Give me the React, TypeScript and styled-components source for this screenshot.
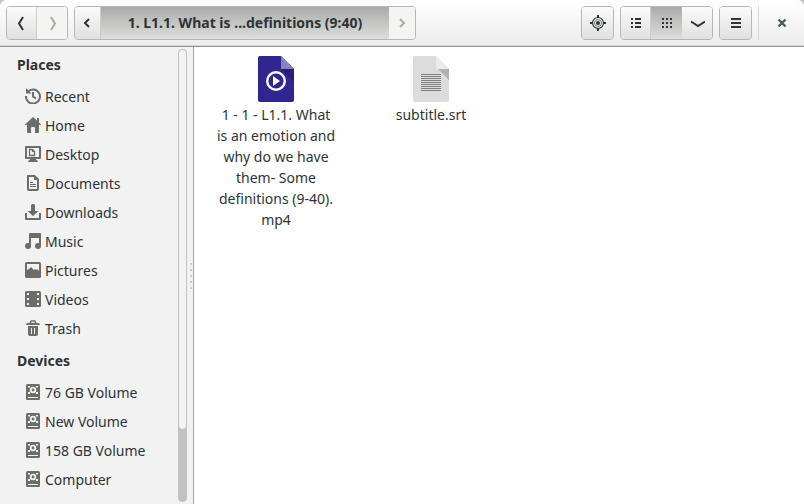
import React from "react";
import styled, { createGlobalStyle, css } from "styled-components";

const GlobalStyle = createGlobalStyle`
  * { box-sizing: border-box; }
  html, body, #root { height: 100%; }
  body {
    margin: 0;
    overflow: hidden;
    background: #c4c5c4;
    color: #2e3436;
    font-family: "Noto Sans", "Open Sans", sans-serif;
    font-size: 14px;
  }
  button { font: inherit; color: inherit; }
`;

const Window = styled.div`
  display: flex;
  flex-direction: column;
  height: 100vh;
  overflow: hidden;
  background: #ffffff;
  border-radius: 7px 7px 0 0;
`;

const HeaderBar = styled.header`
  display: flex;
  align-items: flex-start;
  flex: none;
  height: 47px;
  padding: 6px 5px 0 6px;
  gap: 6px;
  background: linear-gradient(#ffffff, #ececec);
  border-bottom: 1px solid #8f928f;
  box-shadow: inset 0 -1px #d6d8d6;
`;

const ButtonGroup = styled.div`
  display: flex;
  height: 34px;
  border: 1px solid #b4b7b3;
  border-radius: 4px;
  overflow: hidden;
`;

const Spacer = styled.div`
  flex: 1;
`;

const BarButton = styled.button<{ $width: number; $active?: boolean; $divided?: boolean }>`
  display: flex;
  align-items: center;
  justify-content: center;
  width: ${(p) => p.$width}px;
  height: 32px;
  padding: 0;
  border: 0;
  background: linear-gradient(#fbfbfb, #e0e0e0);
  ${(p) => p.$divided && css`border-right: 1px solid #cccecb;`}
  ${(p) => p.$active && css`
    background: linear-gradient(#a8aba7, #bcbebb 35%, #dededd);
    font-weight: 700;
  `}
  &:disabled {
    background: #f4f4f2;
    color: #a7aba7;
  }
`;

const PathLabel = styled.span`
  padding-bottom: 2px;
  white-space: nowrap;
`;

const Divider = styled.div`
  width: 1px;
  height: 34px;
  background: #d5d7d5;
`;

const CloseButton = styled.button`
  display: flex;
  align-items: center;
  justify-content: center;
  width: 34px;
  height: 34px;
  padding: 0;
  border: 0;
  background: none;
`;

const Body = styled.div`
  display: flex;
  flex: 1;
  min-height: 0;
`;

const Sidebar = styled.aside`
  display: flex;
  flex: none;
  width: 194px;
  background: #f2f2f2;
  border-right: 1px solid #a1a3a0;
`;

const PlacesNav = styled.nav`
  flex: 1;
  overflow: hidden;
`;

const SectionTitle = styled.h2`
  margin: 0;
  padding-left: 17px;
  font-size: 14px;
  font-weight: 700;
  line-height: 35px;
`;

const PlaceList = styled.ul`
  margin: 0;
  padding: 0;
  list-style: none;
`;

const PlaceLink = styled.a`
  display: flex;
  align-items: center;
  gap: 4px;
  height: 29px;
  padding-left: 25px;
  color: inherit;
  line-height: 29px;
  text-decoration: none;
  white-space: nowrap;
  svg { flex: none; margin-bottom: 1px; }
`;

const ScrollTrack = styled.div`
  flex: none;
  width: 9px;
  margin: 2px 0;
  background: #c2c2c2;
  border-radius: 5px;
`;

const ScrollThumb = styled.div`
  height: 84%;
  background: #f4f4f4;
  border: 1px solid #bfc0bf;
  border-radius: 5px;
`;

const PaneGrip = styled.div`
  display: flex;
  flex-direction: column;
  align-items: flex-end;
  justify-content: center;
  gap: 4px;
  flex: none;
  width: 6px;
  padding-right: 1px;
`;

const GripDot = styled.span`
  width: 2px;
  height: 2px;
  background: #c8c9c8;
`;

const FileGrid = styled.main`
  display: flex;
  flex: 1;
  flex-wrap: wrap;
  align-content: flex-start;
  gap: 35px;
  padding: 9px 22px;
`;

const FileItem = styled.figure`
  display: flex;
  flex-direction: column;
  align-items: center;
  width: 120px;
  margin: 0;
`;

const FileName = styled.figcaption`
  margin-top: 2px;
  line-height: 21px;
  text-align: center;
`;

function Chevron({ dir, size }: { dir: "left" | "right"; size: "large" | "small" }) {
  const d = size === "large"
    ? dir === "left" ? "M9 2 5 8.500l4 6.500" : "M7 2l4 6.500L7 15"
    : dir === "left" ? "M9 4 5 8l4 4" : "M6 4l4 4-4 4";
  return (
    <svg width="16" height="16" fill="none" stroke="currentColor" strokeWidth="2">
      <path d={d} />
    </svg>
  );
}

const ink = "#6b6d68";
const paper = "#f2f2f2";

const icons: Record<string, React.ReactNode> = {
  recent: (
    <>
      <path d="M2.5 4.200A7 7 0 1 1 1 8" fill="none" stroke={ink} strokeWidth="2" />
      <path d="M1 0v5.500h5.500z" />
      <path d="M8 4v4.500l3 2" fill="none" stroke={ink} strokeWidth="2" />
    </>
  ),
  home: <path d="M8 0 0 7.500V8h2v7q0 1 1 1h3v-5q0-1 1-1h2q1 0 1 1v5h3q1 0 1-1V8h2v-.5l-2-2V1h-2v2.500z" />,
  desktop: (
    <>
      <path d="M1 0h14q1 0 1 1v11q0 1-1 1h-4v1q2 0 2 2H3q0-2 2-2v-1H1q-1 0-1-1V1q0-1 1-1z" />
      <path d="M2 2h12v9H2z" fill={paper} />
      <path d="M4.500 3.500h3l2 2v4h-5z" fill="none" stroke={ink} strokeWidth="1.300" />
      <path d="M7 3v3h3z" />
    </>
  ),
  documents: (
    <>
      <path d="M3 1h6.500L13 4.500V14q0 1-1 1H4q-1 0-1-1z" fill="none" stroke={ink} strokeWidth="2" />
      <path d="M9 1v4h4zM5 7h3v1H5zm0 2h6v1H5zm0 2h6v1H5z" />
    </>
  ),
  downloads: (
    <path d="M7 0h2l1 1v6h3.500L8 12 2.500 7H6V1zM0 9h2v5h12V9h2v6q0 1-1 1H1q-1 0-1-1z" />
  ),
  music: (
    <>
      <path d="M5 0h10q1 0 1 1v12h-2V5H6v8H4V1q0-1 1-1z" />
      <circle cx="3" cy="13" r="3" />
      <circle cx="13" cy="13" r="3" />
    </>
  ),
  pictures: (
    <>
      <rect width="16" height="16" rx="1.500" />
      <path d="M2 2h12v7l-2-2-1 1-1-1-1 1-3-3-2 2-2 1z" fill={paper} />
    </>
  ),
  videos: (
    <>
      <rect width="16" height="16" rx="1.500" />
      <path d="M2 2h2v2H2zm0 5h2v2H2zm0 5h2v2H2zM12 2h2v2h-2zm0 5h2v2h-2zm0 5h2v2h-2z" fill={paper} />
    </>
  ),
  trash: (
    <>
      <path d="M5.500 3V2.200Q5.500 1 6.700 1h2.600q1.200 0 1.200 1.200V3" fill="none" stroke={ink} strokeWidth="1.600" />
      <path d="M1 5q0-2 2-2h10q2 0 2 2zM3 6h10v8q0 2-2 2H5q-2 0-2-2z" />
      <path d="M6.500 8v6M9.500 8v6" stroke={paper} />
    </>
  ),
  drive: (
    <>
      <rect x="1" width="14" height="16" rx="1.500" />
      <circle cx="8" cy="6" r="2.300" fill="none" stroke={paper} strokeWidth="1.800" />
      <path d="M3 2h2v1.500H3zm8 0h2v1.500h-2zM3 8h2v2H3zm8 0h2v2h-2zM3 13h10v1H3z" fill={paper} />
    </>
  ),
};

function PlaceIcon({ name }: { name: string }) {
  return <svg width="16" height="16" fill={ink}>{icons[name]}</svg>;
}

const places = [
  ["recent", "Recent"],
  ["home", "Home"],
  ["desktop", "Desktop"],
  ["documents", "Documents"],
  ["downloads", "Downloads"],
  ["music", "Music"],
  ["pictures", "Pictures"],
  ["videos", "Videos"],
  ["trash", "Trash"],
];

const devices = [
  ["drive", "76 GB Volume"],
  ["drive", "New Volume"],
  ["drive", "158 GB Volume"],
  ["drive", "Computer"],
];

function PlaceSection({ title, items }: { title: string; items: string[][] }) {
  return (
    <section>
      <SectionTitle>{title}</SectionTitle>
      <PlaceList>
        {items.map(([icon, label]) => (
          <li key={label}>
            <PlaceLink href="#"><PlaceIcon name={icon} />{label}</PlaceLink>
          </li>
        ))}
      </PlaceList>
    </section>
  );
}

export default function App() {
  return (
    <>
      <GlobalStyle />
      <Window>
        <HeaderBar>
          <ButtonGroup>
            <BarButton $width={30} $divided aria-label="Back"><Chevron dir="left" size="large" /></BarButton>
            <BarButton $width={30} disabled aria-label="Forward"><Chevron dir="right" size="large" /></BarButton>
          </ButtonGroup>
          <ButtonGroup>
            <BarButton $width={26} $divided aria-label="Earlier folders"><Chevron dir="left" size="small" /></BarButton>
            <BarButton $width={288} $active><PathLabel>1. L1.1. What is ...definitions (9:40)</PathLabel></BarButton>
            <BarButton $width={26} disabled aria-label="Later folders"><Chevron dir="right" size="small" /></BarButton>
          </ButtonGroup>
          <Spacer />
          <ButtonGroup>
            <BarButton $width={31} aria-label="Locate">
              <svg width="16" height="16" fill="none" stroke="#2e3436">
                <circle cx="8" cy="8" r="5.500" strokeWidth="1.200" />
                <circle cx="8" cy="8" r="3.500" stroke="#777a78" />
                <circle cx="8" cy="8" r="2" fill="#2e3436" stroke="none" />
                <path d="M8 0v3M8 13v3M0 8h3M13 8h3" strokeWidth="2" />
              </svg>
            </BarButton>
          </ButtonGroup>
          <ButtonGroup>
            <BarButton $width={30} $divided aria-label="List view">
              <svg width="16" height="16" fill="#2e3436">
                <path d="M3 3h2v2H3zm4 0h6v2H7zM3 7h2v2H3zm4 0h6v2H7zM3 11h2v2H3zm4 0h6v2H7z" />
              </svg>
            </BarButton>
            <BarButton $width={31} $active aria-label="Grid view" aria-pressed>
              <svg width="16" height="16" fill="#2e3436">
                <path d="M3 3h2v2H3zm4 0h2v2H7zm4 0h2v2h-2zM3 7h2v2H3zm4 0h2v2H7zm4 0h2v2h-2zM3 11h2v2H3zm4 0h2v2H7zm4 0h2v2h-2z" />
              </svg>
            </BarButton>
            <BarButton $width={30} aria-label="View options">
              <svg width="16" height="16" fill="none" stroke="#2e3436" strokeWidth="2">
                <path d="M2 6.500l7 4.500 7-4.500" />
              </svg>
            </BarButton>
          </ButtonGroup>
          <ButtonGroup>
            <BarButton $width={31} aria-label="Menu">
              <svg width="16" height="16" fill="#2e3436">
                <path d="M3 3h10v2H3zm0 4h10v2H3zm0 4h10v2H3z" />
              </svg>
            </BarButton>
          </ButtonGroup>
          <Divider />
          <CloseButton aria-label="Close">
            <svg width="16" height="16" fill="none" stroke="#4a5a61" strokeWidth="2.400">
              <path d="M4.500 4.500l7 7M11.500 4.500l-7 7" />
            </svg>
          </CloseButton>
        </HeaderBar>
        <Body>
          <Sidebar>
            <PlacesNav>
              <PlaceSection title="Places" items={places} />
              <PlaceSection title="Devices" items={devices} />
            </PlacesNav>
            <ScrollTrack><ScrollThumb /></ScrollTrack>
            <PaneGrip>
              <GripDot /><GripDot /><GripDot /><GripDot /><GripDot />
            </PaneGrip>
          </Sidebar>
          <FileGrid>
            <FileItem>
              <svg width="36" height="46">
                <path d="M2 0h21l13 13v31q0 2-2 2H2q-2 0-2-2V2q0-2 2-2z" fill="#312590" />
                <path d="M23 13h13v13z" fill="#281d73" />
                <path d="M23 0l13 13H23z" fill="#8880bf" />
                <circle cx="18" cy="25" r="8.800" fill="none" stroke="#fff" strokeWidth="2.400" />
                <path d="M15 20v10l7-5z" fill="#fff" />
              </svg>
              <FileName>1 - 1 - L1.1. What is an emotion and why do we have them- Some definitions (9-40).<wbr />mp4</FileName>
            </FileItem>
            <FileItem>
              <svg width="36" height="46">
                <path d="M2 0h21l13 13v31q0 2-2 2H2q-2 0-2-2V2q0-2 2-2z" fill="#dcdcdc" />
                <path d="M25 13h11v11z" fill="#b0b0b0" />
                <path d="M23 0l13 13H23z" fill="#ebebeb" />
                <path d="M8 18.500h20M8 20.500h20M8 22.500h20M8 24.500h20M8 26.500h20M8 28.500h20M8 30.500h20M8 32.500h20M8 34.500h20" stroke="#808080" />
              </svg>
              <FileName>subtitle.srt</FileName>
            </FileItem>
          </FileGrid>
        </Body>
      </Window>
    </>
  );
}
